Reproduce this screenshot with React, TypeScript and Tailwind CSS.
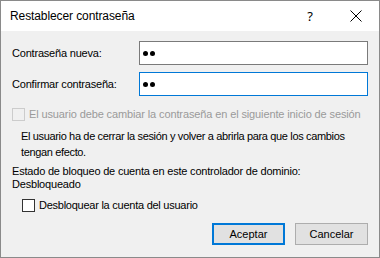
import React from "react";

const Dots = () => (
  <div className="flex items-center gap-[2px] pl-[3px]">
    <span className="w-[5px] h-[5px] rounded-full bg-black" />
    <span className="w-[5px] h-[5px] rounded-full bg-black" />
  </div>
);

export default function App() {
  return (
    <div
      className="w-[380px] h-[258px] border border-[#8a8a8a] bg-[#f0f0f0] flex flex-col text-black"
      style={{ fontFamily: '"Liberation Sans", Arial, sans-serif' }}
    >
      <div className="h-[30px] bg-white flex items-center">
        <div className="pl-[9px] text-[12px] leading-none tracking-[-0.1px]">
          Restablecer contraseña
        </div>
        <div className="flex-1" />
        <div
          className="w-[46px] text-center text-[13px] leading-none"
          style={{ fontFamily: '"Noto Sans", sans-serif' }}
        >
          ?
        </div>
        <div className="w-[46px] flex items-center justify-center">
          <svg width="12" height="12" viewBox="0 0 12 12">
            <path d="M0.5 0.5 L11.5 11.5 M11.5 0.5 L0.5 11.5" stroke="#000" strokeWidth="1" />
          </svg>
        </div>
      </div>

      <div className="flex flex-col px-[11px] text-[11px] tracking-[-0.2px]">
        <div className="flex items-center mt-[10px]">
          <div className="w-[127px]">Contraseña nueva:</div>
          <div className="w-[230px] h-[24px] bg-white border border-[#7a7a7a] flex items-center">
            <Dots />
          </div>
        </div>
        <div className="flex items-center mt-[7px]">
          <div className="w-[127px]">Confirmar contraseña:</div>
          <div className="w-[230px] h-[24px] bg-white border border-[#0078d7] flex items-center">
            <Dots />
          </div>
        </div>

        <div className="flex items-center mt-[12px] h-[13px]">
          <div className="w-[13px] h-[13px] border border-[#cccccc] bg-[#f0f0f0]" />
          <div className="ml-[4px] text-[#9a9a9a] whitespace-nowrap tracking-[-0.12px]">
            El usuario debe cambiar la contraseña en el siguiente inicio de sesión
          </div>
        </div>

        <div className="mt-[7px] ml-[9px] leading-[16px] whitespace-nowrap tracking-[-0.35px]">
          El usuario ha de cerrar la sesión y volver a abrirla para que los cambios
          <br />
          tengan efecto.
        </div>

        <div className="mt-[5px] leading-[13px] whitespace-nowrap">
          Estado de bloqueo de cuenta en este controlador de dominio:
          <br />
          Desbloqueado
        </div>

        <div className="flex items-center mt-[8px] ml-[10px] h-[13px]">
          <div className="w-[13px] h-[13px] border border-[#333333] bg-white" />
          <div className="ml-[4px] whitespace-nowrap tracking-[-0.25px]">Desbloquear la cuenta del usuario</div>
        </div>

        <div className="flex justify-end mt-[11px] gap-[10px] tracking-normal">
          <div className="w-[73px] h-[22px] border-2 border-[#0078d7] bg-[#e1e1e1] flex items-center justify-center">
            Aceptar
          </div>
          <div className="w-[73px] h-[22px] border border-[#adadad] bg-[#e1e1e1] flex items-center justify-center">
            Cancelar
          </div>
        </div>
      </div>
    </div>
  );
}
